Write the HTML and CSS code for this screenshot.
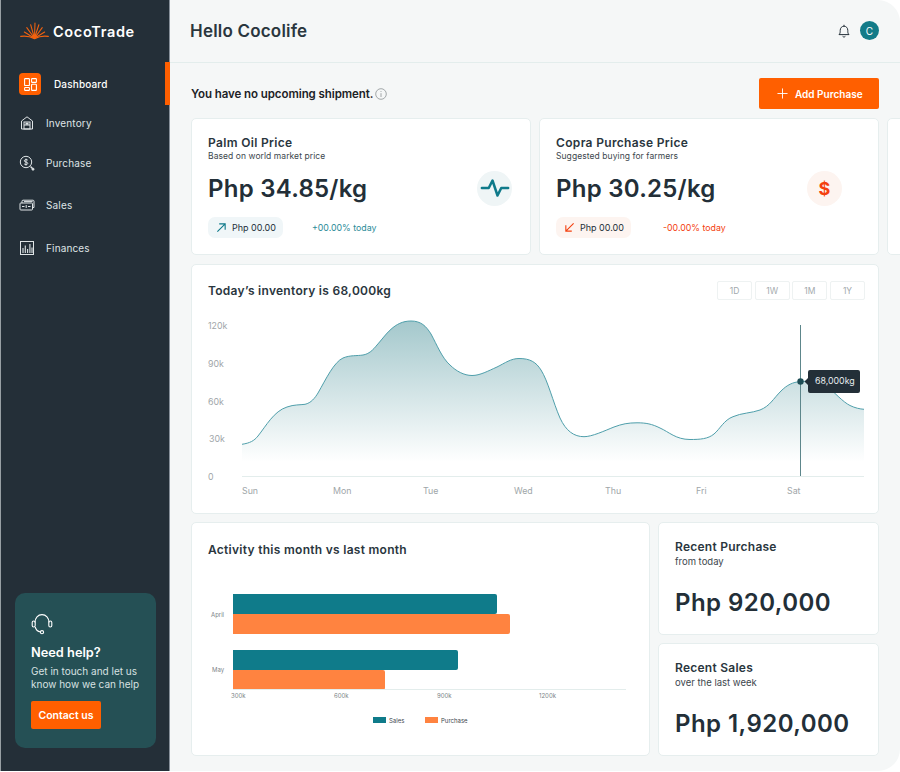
FILE: index.html
```html
<!DOCTYPE html>
<html lang="en">
<head>
<meta charset="utf-8">
<title>CocoTrade</title>
<link rel="stylesheet" href="styles.css">
</head>
<body>
<div class="app">
  <aside class="sidebar">
    <div class="brand">
      <svg class="brand-mark" viewBox="0 0 30 18" fill="none" stroke="#f2620f" stroke-width="1.1" stroke-linecap="round">
        <path d="M15 16.5 15.5 .8M15 16.5 11 2.5M15 16.5 19.5 2.5M15 16.5 7 5.5M15 16.5 23 5.5M15 16.5 4.5 10M15 16.5 25.5 10"/>
        <path d="M.8 14.6C6 13.8 10 14.4 15 16.9 20 14.4 24 13.8 29.2 14.6" stroke-width="1.3"/>
      </svg>
      <span class="brand-name">CocoTrade</span>
    </div>
    <nav class="nav">
      <a class="nav-item nav-item--active">
        <span class="nav-tile">
          <svg class="nav-tile-icon" viewBox="0 0 14 14" fill="none" stroke="#fff" stroke-width="1">
            <rect x="1.5" y="1.5" width="4.5" height="6.5" rx=".6"/><rect x="8" y="1.5" width="4.5" height="3.5" rx=".6"/>
            <rect x="1.5" y="9.8" width="4.5" height="2.7" rx=".6"/><rect x="8" y="6.8" width="4.5" height="5.7" rx=".6"/>
          </svg>
        </span>
        <span>Dashboard</span>
      </a>
      <a class="nav-item">
        <svg class="nav-icon" viewBox="0 0 16 16" fill="none" stroke="#dfe4e6" stroke-width="1">
          <path d="M2.5 14V6L8 1.8 13.5 6V14Z"/><rect x="5" y="7" width="6" height="7"/><path d="M5 10H11"/><rect x="7" y="8.2" width="2" height="1"/>
        </svg>
        <span>Inventory</span>
      </a>
      <a class="nav-item">
        <svg class="nav-icon" viewBox="0 0 16 16" fill="none" stroke="#dfe4e6" stroke-width="1">
          <circle cx="7" cy="7" r="5.7"/><path d="M8.8 5.2C8.3 4.4 5.4 4.2 5.3 5.8 5.2 7.5 8.9 6.6 8.8 8.4 8.7 9.9 5.7 9.8 5.1 8.8M7 3.6V10.6"/>
          <path d="M11.5 11.5 13.5 13.5" stroke-width="1.4"/><circle cx="14" cy="14.2" r="1" fill="#dfe4e6"/>
        </svg>
        <span>Purchase</span>
      </a>
      <a class="nav-item nav-item--sales">
        <svg class="nav-icon" viewBox="0 0 16 16" fill="none" stroke="#dfe4e6" stroke-width="1">
          <rect x="1" y="6" width="12.5" height="7" rx=".8"/><path d="M3 6V4.2C3 3.6 3.4 3.2 4 3.2H14C14.6 3.2 15 3.6 15 4.2V10.5H13.5M5 4.6H13.6"/>
          <path d="M3 9.5H5.5M9 9.5H11.5M7.2 8V11"/>
        </svg>
        <span>Sales</span>
      </a>
      <a class="nav-item nav-item--finances">
        <svg class="nav-icon" viewBox="0 0 16 16" fill="none" stroke="#dfe4e6" stroke-width="1">
          <rect x="1.5" y="1.5" width="13" height="13"/><path d="M4 13V8M6.3 13V5.5M8.6 13V9M10.9 13V4M13 13V7.5" stroke-width="1.1"/>
        </svg>
        <span>Finances</span>
      </a>
    </nav>
    <section class="help">
      <svg class="help-icon" viewBox="0 0 22 22" fill="none" stroke="#fff" stroke-width="1.1">
        <path d="M4 9.5C4 5 7 1.6 11 1.6S18 5 18 9.5"/>
        <rect x="1.2" y="8" width="3" height="6" rx="1.5"/><rect x="17.8" y="8" width="3" height="6" rx="1.5"/>
        <path d="M4.2 14C5 17 7 18.6 9.5 19"/><circle cx="11" cy="19.2" r="1.6"/>
      </svg>
      <h3 class="help-title">Need help?</h3>
      <p class="help-text">Get in touch and let us know how we can help</p>
      <button class="help-btn">Contact us</button>
    </section>
  </aside>
  <span class="active-mark"></span>

  <div class="main">
    <header class="topbar">
      <h1 class="greeting">Hello Cocolife</h1>
      <div class="topbar-tools">
        <svg class="bell" viewBox="0 0 14 14" fill="none" stroke="#232f38" stroke-width="1">
          <path d="M2 10.6C3.2 9.4 3.2 8.4 3.2 6.4 3.2 4 4.8 2.2 7 2.2S10.8 4 10.8 6.4C10.8 8.4 10.8 9.4 12 10.6Z"/>
          <path d="M7 .8V2.2M5.6 12.3C6.2 13.2 7.8 13.2 8.4 12.3"/>
        </svg>
        <span class="avatar">C</span>
      </div>
    </header>

    <div class="content">
      <div class="toolbar">
        <div class="notice">
          <span>You have no upcoming shipment.</span>
          <svg class="info" viewBox="0 0 12 12" fill="none" stroke="#8d9396" stroke-width=".8">
            <circle cx="6" cy="6" r="5.3"/><path d="M6 5.2V9M6 3V3.9"/>
          </svg>
        </div>
        <button class="add-btn">
          <svg class="add-plus" viewBox="0 0 12 12" fill="none" stroke="#fff" stroke-width="1"><path d="M6 .5V11.5M.5 6H11.5"/></svg>
          <span>Add Purchase</span>
        </button>
      </div>

      <div class="price-row">
        <article class="card price">
          <h2 class="price-title">Palm Oil Price</h2>
          <p class="price-sub">Based on world market price</p>
          <div class="price-main">
            <span class="amount">Php 34.85/kg</span>
            <span class="disc disc--up">
              <svg class="disc-icon" viewBox="0 0 24 24" fill="none" stroke="#0f7a8a" stroke-width="2" stroke-linecap="round" stroke-linejoin="round"><path d="M1.5 12H7L10 6 14 18 17 12H22.5"/></svg>
            </span>
          </div>
          <div class="price-foot">
            <span class="chip chip--up">
              <svg class="chip-icon" viewBox="0 0 12 12" fill="none" stroke="#0f7a8a" stroke-width="1.2"><path d="M1.5 10.5 10 2M3.5 2H10V8.5"/></svg>
              Php 00.00
            </span>
            <span class="delta delta--up">+00.00% today</span>
          </div>
        </article>

        <article class="card price">
          <h2 class="price-title">Copra Purchase Price</h2>
          <p class="price-sub">Suggested buying for farmers</p>
          <div class="price-main">
            <span class="amount">Php 30.25/kg</span>
            <span class="disc disc--down">$</span>
          </div>
          <div class="price-foot">
            <span class="chip chip--down">
              <svg class="chip-icon" viewBox="0 0 12 12" fill="none" stroke="#f4400f" stroke-width="1.2"><path d="M10.5 1.5 2 10M8.5 10H2V3.5"/></svg>
              Php 00.00
            </span>
            <span class="delta delta--down">-00.00% today</span>
          </div>
        </article>

        <article class="card price"></article>
      </div>

      <section class="card inventory">
        <div class="inventory-head">
          <h2 class="section-title">Today’s inventory is 68,000kg</h2>
          <div class="ranges">
            <button class="range">1D</button>
            <button class="range">1W</button>
            <button class="range">1M</button>
            <button class="range">1Y</button>
          </div>
        </div>
        <svg class="area-chart" viewBox="191 310 688 200">
          <defs>
            <linearGradient id="areaFill" gradientUnits="userSpaceOnUse" x1="0" y1="321" x2="0" y2="462">
              <stop offset="0" stop-color="#a4c8cc"/>
              <stop offset="1" stop-color="#ffffff"/>
            </linearGradient>
          </defs>
          <path fill="url(#areaFill)" d="M242 444.3C250 443 254 441 258 436C266 426 274 411 287 407C294 404.5 300 405 305 404.3C311 403 315 398 318 393C326 379 334 362 343 358C350 355 357 356 363 355C369 354 373 350 377 345C386 335 394 321 411 321C421 321 426 326 431 334C437 345 442 358 450 365C456 371 464 375.5 472 375.5C480 375.5 488 371 497 367C505 363 511 358.5 519 358.5C530 358.5 536 362 541 370C548 381 553 402 560 418C566 431 574 436.7 584 436.7C592 436.7 604 431 614 427C622 424 628 422.8 637 422.8C646 422.8 652 424 660 428C669 432 676 439.5 690 439.5C700 439.5 708 439 714 434C720 429 724 420 733 416.7C741 413 752 413 760 410C770 406 773 399 781 391C787 385 793 382 800 381.7C806 381 820 380 827 386C835 393 843 402 850 405.5C855 408 860 409 864 409.3V462H242Z"/>
          <path fill="none" stroke="#4f9fab" stroke-width="1" d="M242 444.3C250 443 254 441 258 436C266 426 274 411 287 407C294 404.5 300 405 305 404.3C311 403 315 398 318 393C326 379 334 362 343 358C350 355 357 356 363 355C369 354 373 350 377 345C386 335 394 321 411 321C421 321 426 326 431 334C437 345 442 358 450 365C456 371 464 375.5 472 375.5C480 375.5 488 371 497 367C505 363 511 358.5 519 358.5C530 358.5 536 362 541 370C548 381 553 402 560 418C566 431 574 436.7 584 436.7C592 436.7 604 431 614 427C622 424 628 422.8 637 422.8C646 422.8 652 424 660 428C669 432 676 439.5 690 439.5C700 439.5 708 439 714 434C720 429 724 420 733 416.7C741 413 752 413 760 410C770 406 773 399 781 391C787 385 793 382 800 381.7C806 381 820 380 827 386C835 393 843 402 850 405.5C855 408 860 409 864 409.3"/>
          <path class="axis-line" d="M242 476.5H864"/>
          <path class="cursor-line" d="M800.5 325V476"/>
          <g class="axis-text">
            <text x="208" y="329">120k</text><text x="208" y="367">90k</text><text x="208" y="405">60k</text><text x="209" y="442">30k</text><text x="208" y="480">0</text>
            <text x="242" y="494">Sun</text><text x="333" y="494">Mon</text><text x="423" y="494">Tue</text><text x="514" y="494">Wed</text><text x="605" y="494">Thu</text><text x="696" y="494">Fri</text><text x="787" y="494">Sat</text>
          </g>
          <circle cx="800.5" cy="381.5" r="3.2" fill="#1d4d55"/>
          <path fill="#232f38" d="M810 370H858a2 2 0 0 1 2 2V391a2 2 0 0 1-2 2H810a2 2 0 0 1-2-2V385L804.5 381.5 808 378V372a2 2 0 0 1 2-2Z"/>
          <text class="tip-text" x="815" y="384">68,000kg</text>
        </svg>
      </section>

      <div class="bottom-row">
        <section class="card activity">
          <h2 class="section-title">Activity this month vs last month</h2>
          <svg class="bar-chart" viewBox="191 570 459 186">
            <g fill="#0f7b8a">
              <path d="M233 594H495a2 2 0 0 1 2 2V612a2 2 0 0 1-2 2H233Z"/>
              <path d="M233 650H456a2 2 0 0 1 2 2V668a2 2 0 0 1-2 2H233Z"/>
            </g>
            <g fill="#ff8340">
              <path d="M233 614H508a2 2 0 0 1 2 2V632a2 2 0 0 1-2 2H233Z"/>
              <path d="M233 670H383a2 2 0 0 1 2 2V688a2 2 0 0 1-2 2H233Z"/>
            </g>
            <path class="axis-line" d="M233 689.5H626"/>
            <g class="bar-text">
              <text x="211" y="616.5">April</text><text x="212" y="672">May</text>
              <text x="231" y="697.5">300k</text><text x="334" y="697.5">600k</text><text x="437" y="697.5">900k</text><text x="539" y="697.5">1200k</text>
            </g>
            <rect x="373" y="717" width="13" height="6" fill="#0f7b8a"/>
            <rect x="425" y="717" width="13" height="6" fill="#ff8340"/>
            <g class="legend-text"><text x="389" y="722.5">Sales</text><text x="441" y="722.5">Purchase</text></g>
          </svg>
        </section>
        <div class="recent-col">
          <article class="card recent">
            <h2 class="recent-title">Recent Purchase</h2>
            <p class="recent-sub">from today</p>
            <p class="amount recent-amount">Php 920,000</p>
          </article>
          <article class="card recent">
            <h2 class="recent-title">Recent Sales</h2>
            <p class="recent-sub">over the last week</p>
            <p class="amount recent-amount">Php 1,920,000</p>
          </article>
        </div>
      </div>
    </div>
  </div>
</div>
</body>
</html>
```
FILE: styles.css
```css
* { box-sizing: border-box; }
html, body { margin: 0; padding: 0; background: #fff; }
body { font-family: Inter, "Noto Sans", "Liberation Sans", sans-serif; color: #232f38; }
h1, h2, h3, p { margin: 0; }
button { font-family: inherit; border: 0; cursor: pointer; }

.app {
  position: relative;
  display: flex;
  width: 900px;
  height: 771px;
  overflow: hidden;
  background: #f5f7f7;
  border-radius: 0 22px 22px 0;
}

/* sidebar */
.sidebar {
  flex: 0 0 170px;
  display: flex;
  flex-direction: column;
  background: #242f38;
  border-left: 1px solid #98a0a4;
  border-right: 1px solid #87909a;
  color: #dfe4e6;
}
.brand {
  height: 62px;
  display: flex;
  align-items: center;
  gap: 4px;
  padding-left: 19px;
}
.brand-mark { width: 29px; height: 18px; flex: none; }
.brand-name { font-size: 14.5px; font-weight: 600; color: #fff; letter-spacing: .65px; }
.nav { display: flex; flex-direction: column; padding-top: 2px; }
.nav-item {
  height: 40px;
  display: flex;
  align-items: center;
  gap: 11px;
  padding-left: 18px;
  font-size: 10px;
  letter-spacing: .15px;
}
.nav-item--active { gap: 13px; margin-bottom: -1px; color: #fff; font-weight: 500; }
.nav-item--sales { margin-top: 2px; }
.nav-item--finances { margin-top: 3px; }
.nav-tile {
  width: 22px;
  height: 22px;
  border-radius: 4px;
  background: #ff5f00;
  display: flex;
  align-items: center;
  justify-content: center;
}
.nav-tile-icon { width: 15px; height: 15px; }
.nav-icon { width: 16px; height: 16px; flex: none; }
.active-mark {
  position: absolute;
  left: 165px;
  top: 62px;
  width: 5px;
  height: 43px;
  background: #ff5f00;
}
.help {
  margin: auto 13px 23px 14px;
  height: 155px;
  padding: 20px 8px 0 16px;
  border-radius: 10px;
  background: #255055;
}
.help-icon { display: block; width: 22px; height: 22px; }
.help-title { margin-top: 9px; font-size: 12.8px; font-weight: 600; color: #fff; line-height: 18px; }
.help-text { margin-top: 3px; font-size: 10px; line-height: 13px; color: #d7e0e1; }
.help-btn {
  display: block;
  margin-top: 10px;
  width: 70px;
  height: 28px;
  padding: 0;
  border-radius: 2px;
  background: #ff5f00;
  color: #fff;
  font-size: 10.5px;
  font-weight: 600;
}

/* main */
.main { flex: 1; min-width: 0; display: flex; flex-direction: column; }
.topbar {
  height: 63px;
  flex: none;
  display: flex;
  align-items: center;
  justify-content: space-between;
  padding: 0 21px 1px 20px;
  border-bottom: 1px solid #e3edec;
}
.greeting { font-size: 17px; font-weight: 600; letter-spacing: .2px; color: #2a363e; }
.topbar-tools { display: flex; align-items: center; gap: 9px; }
.bell { width: 14px; height: 14px; display: block; }
.avatar {
  width: 19px;
  height: 19px;
  border-radius: 50%;
  background: #127b88;
  color: #fff;
  font-size: 10px;
  display: flex;
  align-items: center;
  justify-content: center;
}
.content { padding: 15px 21px 0; }
.toolbar { height: 31px; display: flex; align-items: center; justify-content: space-between; }
.notice { display: flex; align-items: center; gap: 2px; font-size: 11.5px; font-weight: 600; letter-spacing: -.07px; color: #1c2226; }
.info { width: 12px; height: 12px; display: block; }
.add-btn {
  width: 120px;
  height: 31px;
  padding: 0 0 0 18px;
  display: flex;
  align-items: center;
  gap: 7px;
  border-radius: 2px;
  background: #ff5f00;
  color: #fff;
  font-size: 10px;
  font-weight: 600;
}
.add-plus { width: 11px; height: 11px; }

.card {
  background: #fff;
  border: 1px solid #e6eeee;
  border-radius: 5px;
}
.price-row { display: flex; gap: 8px; margin-top: 9px; width: 760px; }
.price { flex: 0 0 340px; height: 137px; padding: 16px 18px 0 16px; }
.price-title { font-size: 12px; font-weight: 600; line-height: 15px; letter-spacing: .33px; color: #2a363e; }
.price-sub { font-size: 8.5px; line-height: 12px; letter-spacing: .07px; color: #3d474e; }
.price-main {
  margin-top: 8px;
  height: 36px;
  display: flex;
  align-items: center;
  justify-content: space-between;
}
.amount { font-size: 24px; font-weight: 600; letter-spacing: .25px; color: #232f38; }
.disc {
  width: 35px;
  height: 35px;
  border-radius: 50%;
  display: flex;
  align-items: center;
  justify-content: center;
}
.disc--up { background: #eff5f6; }
.disc--down {
  margin-right: 18px;
  background: #fdf4f0;
  color: #f4400f;
  font-size: 18px;
  font-weight: 700;
}
.disc-icon { width: 30px; height: 30px; }
.price-foot { margin-top: 11px; display: flex; align-items: center; gap: 29px; }
.chip {
  width: 75px;
  height: 21px;
  display: flex;
  align-items: center;
  gap: 5px;
  padding-left: 8px;
  border-radius: 7px;
  font-size: 9px;
  color: #232f38;
}
.chip--up { background: #f0f6f8; }
.chip--down { background: #fdf4f0; }
.chip-icon { width: 11px; height: 11px; flex: none; }
.delta { font-size: 8.8px; }
.delta--up { color: #2a8b98; }
.delta--down { margin-left: 3px; color: #f4400f; }

.inventory { margin-top: 9px; height: 250px; }
.inventory-head {
  height: 45px;
  display: flex;
  align-items: flex-start;
  justify-content: space-between;
  padding: 16px 13px 0 16px;
}
.section-title { font-size: 12px; font-weight: 600; line-height: 18px; letter-spacing: .28px; color: #2a363e; }
.inventory-head .section-title { margin-top: 1px; }
.ranges { display: flex; gap: 2.67px; }
.range {
  width: 35px;
  height: 19px;
  padding: 0;
  border: 1px solid #eef2f2;
  border-radius: 2px;
  background: #fff;
  color: #a3aaad;
  font-size: 8.5px;
}
.area-chart { display: block; width: 688px; height: 200px; margin-left: -1px; overflow: visible; }
.axis-line { stroke: #e3edec; stroke-width: 1; fill: none; }
.cursor-line { stroke: #5d868b; stroke-width: 1; fill: none; }
.axis-text { font-size: 8.8px; fill: #a0a6a9; }
.tip-text { font-size: 8.8px; fill: #e8edef; }

.bottom-row { margin-top: 8px; display: flex; gap: 8px; }
.activity { flex: 0 0 459px; height: 234px; position: relative; padding: 18px 16px 0; }
.bar-chart { position: absolute; left: -1px; top: 47px; width: 459px; height: 186px; }
.bar-text { font-size: 6px; fill: #7c8488; }
.legend-text { font-size: 6px; fill: #3b464d; }
.recent-col { flex: 1; display: flex; flex-direction: column; gap: 8px; }
.recent { height: 113px; padding: 16px 16px 0; }
.recent-title { font-size: 12px; font-weight: 600; line-height: 16px; letter-spacing: .25px; color: #2a363e; }
.recent-sub { font-size: 9.5px; line-height: 13px; color: #3d474e; }
.recent-amount { margin-top: 16px; line-height: 38px; letter-spacing: .45px; }
```
